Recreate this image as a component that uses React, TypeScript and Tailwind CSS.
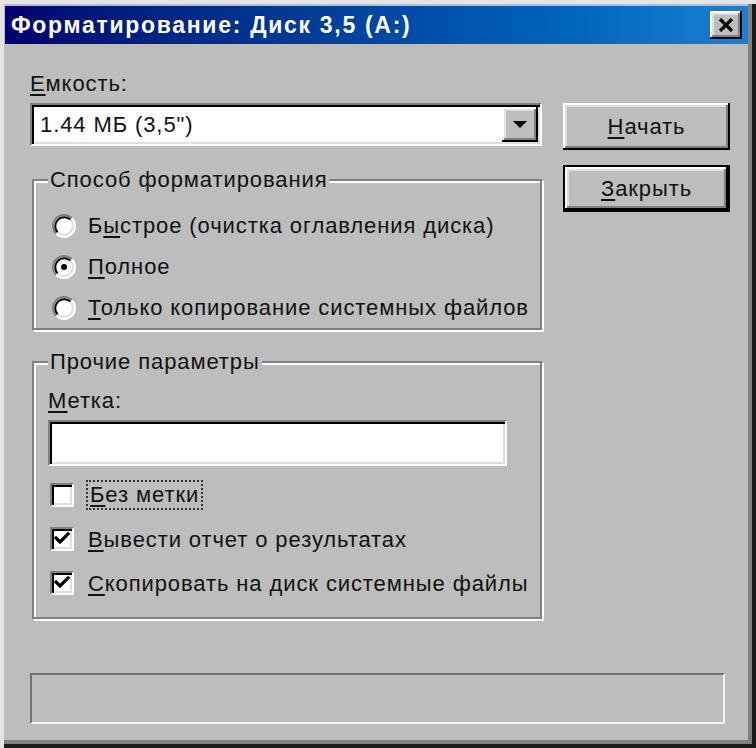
import React from "react";

const FONT = { fontFamily: '"Liberation Sans", Arial, sans-serif' };

function U({ children }: { children: React.ReactNode }) {
  return <span className="underline decoration-2 underline-offset-[3px]">{children}</span>;
}

function Radio({ checked }: { checked?: boolean }) {
  return (
    <svg width="24" height="24" viewBox="0 0 24 24" className="shrink-0">
      <circle cx="12" cy="12" r="10" fill="#ffffff" />
      <path d="M4.22 19.78 A11 11 0 0 1 19.78 4.22" stroke="#808080" strokeWidth="2" fill="none" />
      <path d="M19.78 4.22 A11 11 0 0 1 4.22 19.78" stroke="#ffffff" strokeWidth="2" fill="none" />
      <path d="M5.64 18.36 A9 9 0 0 1 18.36 5.64" stroke="#000000" strokeWidth="2" fill="none" />
      <path d="M18.36 5.64 A9 9 0 0 1 5.64 18.36" stroke="#dfdfdf" strokeWidth="2" fill="none" />
      {checked && <circle cx="12" cy="12" r="3" fill="#000000" />}
    </svg>
  );
}

function Check({ checked }: { checked?: boolean }) {
  return (
    <div className="w-[24px] h-[24px] shrink-0 bg-white border-2 border-t-[#808080] border-l-[#808080] border-b-white border-r-white shadow-[inset_2px_2px_0_#000,inset_-2px_-2px_0_#dfdfdf] flex items-center justify-center">
      {checked && (
        <svg width="20" height="20" viewBox="0 0 20 20">
          <path d="M4 9 L8 13 L16 5" stroke="#000" strokeWidth="3.2" fill="none" strokeLinecap="square" />
        </svg>
      )}
    </div>
  );
}

const raised =
  "bg-[#bdbdbd] shadow-[inset_-2px_-2px_0_#000,inset_2px_2px_0_#fff,inset_-4px_-4px_0_#808080,inset_4px_4px_0_#dfdfdf]";
const sunken =
  "bg-white border-2 border-t-[#808080] border-l-[#808080] border-b-white border-r-white shadow-[inset_2px_2px_0_#000,inset_-2px_-2px_0_#dfdfdf]";
const group =
  "border-2 border-[#808080] shadow-[inset_2px_2px_0_#fff,2px_2px_0_#fff] m-0";

export default function App() {
  return (
    <div
      style={FONT}
      className="w-[756px] h-[748px] bg-[#bdbdbd] text-[#111] flex flex-col pt-[6px] pl-[5px] pr-[8px] pb-[4px] shadow-[inset_4px_4px_0_#e4e4e4,inset_-4px_-4px_0_#1a1a1a,inset_-8px_-8px_0_#808080] text-[22px] tracking-[0.9px] whitespace-nowrap"
    >
      <div className="h-[38px] shrink-0 flex items-center justify-between pl-[6px] pr-[6px] bg-gradient-to-r from-[#000070] to-[#1a80d4]">
        <span className="text-white font-bold text-[23px] tracking-[1.7px] leading-none">
          Форматирование: Диск 3,5 (A:)
        </span>
        <div className={`w-[32px] h-[28px] flex items-center justify-center ${raised}`}>
          <svg width="16" height="14" viewBox="0 0 16 14">
            <path d="M2 1 L14 13 M14 1 L2 13" stroke="#000" strokeWidth="3.2" />
          </svg>
        </div>
      </div>

      <div className="flex-1 flex flex-col pl-[25px] pb-[20px]">
        <div className="flex">
          <div className="w-[512px] flex flex-col">
            <div className="mt-[28px] h-[24px] leading-[24px]">
              <U>Е</U>мкость:
            </div>
            <div className={`mt-[7px] h-[43px] flex items-center ${sunken}`}>
              <span className="pl-[8px] flex-1">1.44 МБ (3,5")</span>
              <div className={`w-[36px] h-[35px] mr-[2px] flex items-center justify-center ${raised}`}>
                <svg width="14" height="8" viewBox="0 0 14 8">
                  <path d="M0 0 H14 L7 7 Z" fill="#000" />
                </svg>
              </div>
            </div>

            <fieldset className={`mt-[22px] ml-[2px] w-[510px] h-[162px] pt-[13px] pl-[16px] pr-0 ${group}`}>
              <legend className="ml-[-2px] px-[2px] h-[24px] leading-[24px] bg-[#bdbdbd]">Способ форматирования</legend>
              <div className="h-[41px] flex items-center gap-[12px] pl-[2px]">
                <Radio />
                <span>
                  Б<U>ы</U>строе (очистка оглавления диска)
                </span>
              </div>
              <div className="h-[41px] flex items-center gap-[12px] pl-[2px]">
                <Radio checked />
                <span>
                  <U>П</U>олное
                </span>
              </div>
              <div className="h-[41px] flex items-center gap-[12px] pl-[2px]">
                <Radio />
                <span>
                  <U>Т</U>олько копирование системных файлов
                </span>
              </div>
            </fieldset>

            <fieldset className={`mt-[20px] ml-[2px] w-[510px] h-[269px] pt-[15px] pl-[14px] pr-0 ${group}`}>
              <legend className="ml-[0px] px-[2px] h-[24px] leading-[24px] bg-[#bdbdbd]">Прочие параметры</legend>
              <div className="h-[24px] leading-[24px]">
                <U>М</U>етка:
              </div>
              <div className={`mt-[7px] w-[459px] h-[46px] ${sunken}`} />
              <div className="mt-[8px] h-[42px] flex items-center gap-[12px] pl-[2px]">
                <Check />
                <span className="border-2 border-dotted border-[#333] px-[2px] leading-[26px]">
                  <U>Б</U>ез метки
                </span>
              </div>
              <div className="mt-[2px] h-[42px] flex items-center gap-[14px] pl-[2px]">
                <Check checked />
                <span>
                  <U>В</U>ывести отчет о результатах
                </span>
              </div>
              <div className="mt-[2px] h-[42px] flex items-center gap-[14px] pl-[2px]">
                <Check checked />
                <span>
                  <U>С</U>копировать на диск системные файлы
                </span>
              </div>
            </fieldset>
          </div>

          <div className="ml-[21px] w-[167px] flex flex-col gap-[15px] pt-[59px]">
            <div className={`h-[47px] flex items-center justify-center ${raised}`}>
              <span>
                <U>Н</U>ачать
              </span>
            </div>
            <div className="h-[47px] border-2 border-black">
              <div className={`h-full flex items-center justify-center ${raised}`}>
                <span>
                  <U>З</U>акрыть
                </span>
              </div>
            </div>
          </div>
        </div>

        <div className="mt-auto w-[695px] h-[51px] border-2 border-t-[#707070] border-l-[#707070] border-b-[#f4f4f4] border-r-[#f4f4f4]" />
      </div>
    </div>
  );
}
